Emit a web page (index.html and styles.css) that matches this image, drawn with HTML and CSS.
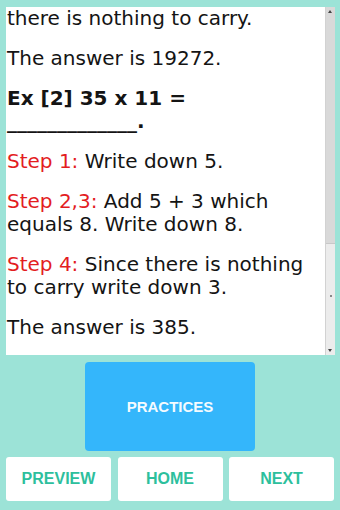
FILE: index.html
```html
<!DOCTYPE html>
<html>
<head>
<meta charset="utf-8">
<link rel="stylesheet" href="styles.css">
</head>
<body>
<div class="screen">
  <div class="panel">
    <div class="content">
      <p>there is nothing to carry.</p>
      <p>The answer is 19272.</p>
      <p class="ex"><span>Ex [2] 35 x 11 =</span><br><span>_____________.</span></p>
      <p><span class="step">Step 1:</span> Write down 5.</p>
      <p><span class="step">Step 2,3:</span> <span>Add 5 + 3 which</span><br><span>equals 8. Write down 8.</span></p>
      <p><span class="step">Step 4:</span> <span>Since there is nothing</span><br><span>to carry write down 3.</span></p>
      <p>The answer is 385.</p>
    </div>
    <div class="scrollbar">
      <div class="arrow up"></div>
      <div class="thumb"></div>
      <div class="track"><span class="dot"></span></div>
      <div class="arrow down"></div>
    </div>
  </div>
  <div class="practice-row">
    <button class="practices">PRACTICES</button>
  </div>
  <div class="nav">
    <button class="navbtn">PREVIEW</button>
    <button class="navbtn">HOME</button>
    <button class="navbtn">NEXT</button>
  </div>
</div>
</body>
</html>
```
FILE: styles.css
```css
html, body {
  margin: 0;
  padding: 0;
  background: #9ce3d7;
}
.screen {
  width: 340px;
  height: 510px;
  padding: 7px 5px 0 6px;
  box-sizing: border-box;
  display: flex;
  flex-direction: column;
}
.panel {
  height: 348px;
  background: #ffffff;
  display: flex;
  overflow: hidden;
}
.content {
  flex: 1;
  padding-left: 1px;
  overflow: hidden;
  font-family: "DejaVu Sans", Verdana, sans-serif;
  font-size: 20px;
  line-height: 23px;
  color: #141414;
}
.content p {
  margin: 0 0 17px 0;
}
.content .ex {
  font-weight: bold;
}
.step {
  color: #e31d1f;
}
.scrollbar {
  width: 10px;
  display: flex;
  flex-direction: column;
  background: #ececec;
  border-left: 1px solid #d2d2d2;
  box-sizing: border-box;
}
.arrow {
  height: 8px;
  position: relative;
  flex: none;
}
.arrow::after {
  content: "";
  position: absolute;
  left: 2px;
  top: 3px;
  width: 0;
  height: 0;
  border-left: 2px solid transparent;
  border-right: 2px solid transparent;
}
.arrow.up {
  background: #d9d9d9;
}
.arrow.up::after {
  border-bottom: 3px solid #444;
}
.arrow.down::after {
  top: 2px;
  border-top: 3px solid #444;
}
.thumb {
  height: 228px;
  background: #d9d9d9;
  border-bottom: 1px solid #c8c8c8;
  flex: none;
}
.track {
  flex: 1;
  display: flex;
  align-items: center;
  justify-content: center;
}
.dot {
  width: 2px;
  height: 2px;
  background: #888;
}
.practice-row {
  display: flex;
  justify-content: center;
  padding-top: 7px;
  margin-left: -6px;
  margin-right: -5px;
}
.practices {
  width: 170px;
  height: 89px;
  border: none;
  border-radius: 4px;
  background: #34b6fb;
  color: #f4fbff;
  font-family: "Liberation Sans", Arial, sans-serif;
  font-weight: bold;
  font-size: 15px;
  padding: 0;
}
.nav {
  display: grid;
  grid-template-columns: 105px 105px 105px;
  column-gap: 6.5px;
  padding-top: 6px;
}
.navbtn {
  height: 44px;
  border: none;
  border-radius: 3px;
  background: #ffffff;
  color: #2dbf9d;
  font-family: "Liberation Sans", Arial, sans-serif;
  font-weight: bold;
  font-size: 16px;
  padding: 0;
}
```
